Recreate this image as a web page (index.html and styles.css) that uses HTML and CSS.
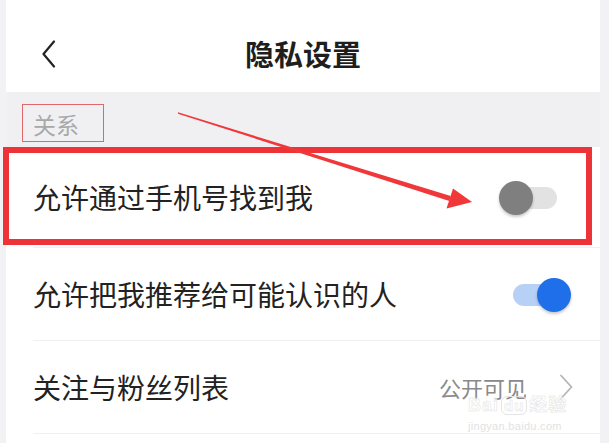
FILE: index.html
```html
<!DOCTYPE html>
<html lang="zh-CN">
<head>
<meta charset="utf-8">
<title>隐私设置</title>
<link rel="stylesheet" href="styles.css">
</head>
<body>
<div class="page">
  <header class="header">
    <svg class="back" width="16" height="28" viewBox="0 0 16 28"><path d="M13 1.5 L2.5 14 L13 26.5" fill="none" stroke="#222" stroke-width="2.2" stroke-linecap="round" stroke-linejoin="round"/></svg>
    <h1 class="title">隐私设置</h1>
  </header>
  <div class="section">
    <span class="section-label">关系</span>
  </div>
  <div class="list">
    <div class="row row-first">
      <span class="row-text">允许通过手机号找到我</span>
      <span class="switch"><span class="track"></span><span class="knob"></span></span>
    </div>
    <div class="row">
      <span class="row-text">允许把我推荐给可能认识的人</span>
      <span class="switch on"><span class="track"></span><span class="knob"></span></span>
    </div>
    <div class="row">
      <span class="row-text">关注与粉丝列表</span>
      <span class="value">公开可见</span>
      <svg class="chev" width="14" height="26" viewBox="0 0 14 26"><path d="M2 1.5 L12.5 13 L2 24.5" fill="none" stroke="#b5b5b5" stroke-width="1.8" stroke-linecap="round" stroke-linejoin="round"/></svg>
    </div>
    <div class="row-tail"></div>
  </div>
</div>
<div class="highlight"></div>
<svg class="arrow" width="609" height="443" viewBox="0 0 609 443">
  <polygon points="178,112.3 178,113.7 449.3,201 450.7,196.1" fill="#f0373a"/>
  <polygon points="453,188.5 472,202 446.5,208.5" fill="#f0373a"/>
</svg>
<div class="watermark"><span class="wm-big">Bai<span class="wm-du">du</span>经验</span><span class="wm-small">jingyan.baidu.com</span></div>
</body>
</html>
```
FILE: styles.css
```css
html, body {
  margin: 0;
  padding: 0;
}
body {
  width: 609px;
  height: 443px;
  overflow: hidden;
  background: #f2f2f4;
  font-family: "Noto Sans CJK SC", "Noto Sans", sans-serif;
  position: relative;
}
.page {
  margin: 0 9px 0 6px;
  background: #fff;
  height: 443px;
}
.header {
  height: 78px;
  padding-top: 14px;
  display: flex;
  align-items: center;
  justify-content: center;
  position: relative;
  background: #fff;
}
.back {
  position: absolute;
  left: 35px;
  top: 40px;
}
.title {
  margin: 0;
  font-size: 29px;
  font-weight: 600;
  color: #1e1e1e;
  letter-spacing: 0;
}
.section {
  height: 55px;
  background: #f0f0f3;
  display: flex;
  align-items: flex-start;
  padding-left: 16px;
  box-sizing: border-box;
  padding-top: 12px;
}
.section-label {
  border: 1px solid #e0686b;
  height: 36px;
  line-height: 38px;
  padding: 0 24px 0 10px;
  font-size: 23px;
  color: #a8a8a8;
}
.list {
  background: #fff;
}
.row {
  height: 92px;
  margin-left: 27px;
  padding-right: 29px;
  display: flex;
  align-items: center;
  border-bottom: 1px solid #f0f0f0;
}
.row-first {
  height: 100px;
}
.row-text {
  flex: 1;
  font-size: 28px;
  color: #222;
}
.switch {
  position: relative;
  width: 72px;
  height: 34px;
  margin-top: 2px;
}
.track {
  position: absolute;
  left: 14px;
  top: 6px;
  width: 44px;
  height: 22px;
  border-radius: 11px;
  background: #e2e2e2;
}
.knob {
  position: absolute;
  left: 0;
  top: 0;
  width: 34px;
  height: 34px;
  border-radius: 50%;
  background: #7f7f7f;
  box-shadow: 0 2px 3px rgba(0, 0, 0, 0.22);
}
.switch.on .track {
  background: #b7d1f6;
}
.switch.on .knob {
  left: 38px;
  background: #1e6fe9;
}
.value {
  font-size: 22px;
  color: #8a8a8a;
  margin-right: 32px;
}
.chev {
  margin-right: -2px;
}
.highlight {
  position: absolute;
  left: 3px;
  top: 147px;
  width: 577px;
  height: 86px;
  border: 6px solid #ee3338;
}
.arrow {
  position: absolute;
  left: 0;
  top: 0;
}
.watermark {
  position: absolute;
  left: 468px;
  top: 396px;
  display: flex;
  flex-direction: column;
  align-items: flex-start;
  font-family: "Liberation Sans", "Noto Sans CJK SC", sans-serif;
}
.wm-big {
  font-size: 18px;
  line-height: 18px;
  font-weight: 700;
  letter-spacing: 1px;
  color: rgba(255, 255, 255, 0.6);
  -webkit-text-stroke: 0.5px #e2e2e2;
}
.wm-du {
  font-size: 15px;
  padding: 0 2px;
  border: 1px solid #e4e4e4;
  border-radius: 6px;
  margin: 0 2px;
}
.wm-small {
  font-size: 11px;
  line-height: 13px;
  margin-top: 5px;
  color: #e2e2e2;
  letter-spacing: 0.3px;
}
```
